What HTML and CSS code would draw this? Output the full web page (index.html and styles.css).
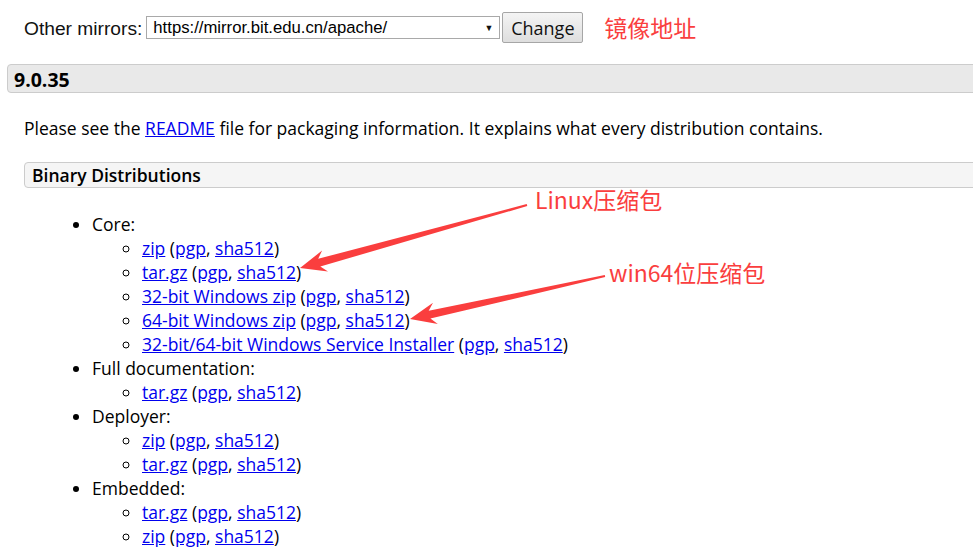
FILE: index.html
```html
<!DOCTYPE html>
<html lang="zh">
<head>
<meta charset="utf-8">
<title>Apache Tomcat 9 Downloads</title>
<link rel="stylesheet" href="styles.css">
</head>
<body>
<div class="page">
  <div class="mirror-row">
    <span class="mirror-label">Other mirrors:</span>
    <div class="select"><span class="select-text">https://mirror.bit.edu.cn/apache/</span><span class="caret">▼</span></div>
    <button class="btn">Change</button>
    <span class="note note-mirror">镜像地址</span>
  </div>

  <h3 class="version">9.0.35</h3>

  <p class="intro">Please see the <a href="#">README</a> file for packaging information. It explains what every distribution contains.</p>

  <h4 class="sub">Binary Distributions</h4>

  <ul class="dist">
    <li>Core:
      <ul>
        <li><a href="#">zip</a> (<a href="#">pgp</a>, <a href="#">sha512</a>)</li>
        <li><a href="#">tar.gz</a> (<a href="#">pgp</a>, <a href="#">sha512</a>)</li>
        <li><a href="#">32-bit Windows zip</a> (<a href="#">pgp</a>, <a href="#">sha512</a>)</li>
        <li><a href="#">64-bit Windows zip</a> (<a href="#">pgp</a>, <a href="#">sha512</a>)</li>
        <li><a href="#">32-bit/64-bit Windows Service Installer</a> (<a href="#">pgp</a>, <a href="#">sha512</a>)</li>
      </ul>
    </li>
    <li>Full documentation:
      <ul>
        <li><a href="#">tar.gz</a> (<a href="#">pgp</a>, <a href="#">sha512</a>)</li>
      </ul>
    </li>
    <li>Deployer:
      <ul>
        <li><a href="#">zip</a> (<a href="#">pgp</a>, <a href="#">sha512</a>)</li>
        <li><a href="#">tar.gz</a> (<a href="#">pgp</a>, <a href="#">sha512</a>)</li>
      </ul>
    </li>
    <li>Embedded:
      <ul>
        <li><a href="#">tar.gz</a> (<a href="#">pgp</a>, <a href="#">sha512</a>)</li>
        <li><a href="#">zip</a> (<a href="#">pgp</a>, <a href="#">sha512</a>)</li>
      </ul>
    </li>
  </ul>

  <svg class="arrows" width="973" height="560" viewBox="0 0 973 560" aria-hidden="true">
    <polygon points="526.7,204 318.2,258.8 322.1,250.5 300,268 328,271.6 320.3,266.5 527.3,206"/>
    <polygon points="604.8,275 428.7,310.8 433,302.7 410,319 437.8,324.1 430.4,318.6 605.2,277"/>
  </svg>
  <span class="note note-linux">Linux压缩包</span>
  <span class="note note-win">win64位压缩包</span>
</div>
</body>
</html>
```

FILE: styles.css
```css
html, body {
  margin: 0;
  padding: 0;
  background: #fff;
  overflow: hidden;
}

.page {
  position: relative;
  width: 973px;
  height: 560px;
  overflow: hidden;
  font-family: "Open Sans", "Noto Sans", sans-serif;
  font-size: 17.5px;
  color: #000;
  padding-top: 12px;
  box-sizing: border-box;
}

a {
  color: #0000ee;
  text-decoration: underline;
}

.mirror-row {
  display: flex;
  align-items: center;
  height: 31px;
  padding-left: 24px;
}

.mirror-label {
  font-family: "Liberation Sans", Arial, sans-serif;
  font-size: 19.2px;
  margin-right: 4px;
  color: #111;
  position: relative;
  top: 1px;
}

.select {
  display: flex;
  align-items: center;
  justify-content: space-between;
  width: 354px;
  height: 23px;
  box-sizing: border-box;
  border: 1px solid #a9a9a9;
  padding: 0 6px 0 6px;
  font-family: "Liberation Sans", Arial, sans-serif;
  font-size: 16.7px;
  color: #000;
}

.caret {
  font-size: 9px;
  color: #111;
}

.btn {
  margin-left: 2px;
  width: 81px;
  height: 31px;
  box-sizing: border-box;
  border: 1px solid #a6a6a6;
  border-radius: 2px;
  background: linear-gradient(#f4f4f4, #dedede);
  font-family: "Open Sans", sans-serif;
  font-size: 18px;
  color: #111;
  padding: 0;
}

.note {
  font-family: "Noto Sans CJK SC", "Noto Sans", sans-serif;
  font-size: 23px;
  color: #fa3e3e;
  line-height: 1;
}

.note-mirror {
  margin-left: 21px;
}

.version {
  margin: 21px -20px 0 7px;
  height: 29px;
  box-sizing: border-box;
  border: 1px solid #cccccc;
  border-radius: 4px;
  background: #e9e9e9;
  padding-left: 6px;
  font-size: 19.5px;
  font-weight: 700;
  line-height: 29px;
}

.intro {
  margin: 23px 0 0 24px;
  line-height: 24px;
}

.sub {
  margin: 22px -20px 0 24px;
  height: 26px;
  box-sizing: border-box;
  border: 1px solid #cccccc;
  border-radius: 4px;
  background: #f5f5f5;
  padding-left: 7px;
  font-size: 17.5px;
  font-weight: 600;
  line-height: 24px;
}

.dist {
  margin: 24px 0 0 0;
  padding-left: 92px;
  line-height: 24px;
  list-style: disc;
}

.dist ul {
  margin: 0;
  padding-left: 50px;
  list-style: circle;
}

.arrows {
  position: absolute;
  left: 0;
  top: 0;
  pointer-events: none;
}

.arrows polygon {
  fill: #fa3e3e;
}

.note-linux {
  position: absolute;
  left: 535px;
  top: 188px;
}

.note-win {
  position: absolute;
  left: 609px;
  top: 261px;
}
```
